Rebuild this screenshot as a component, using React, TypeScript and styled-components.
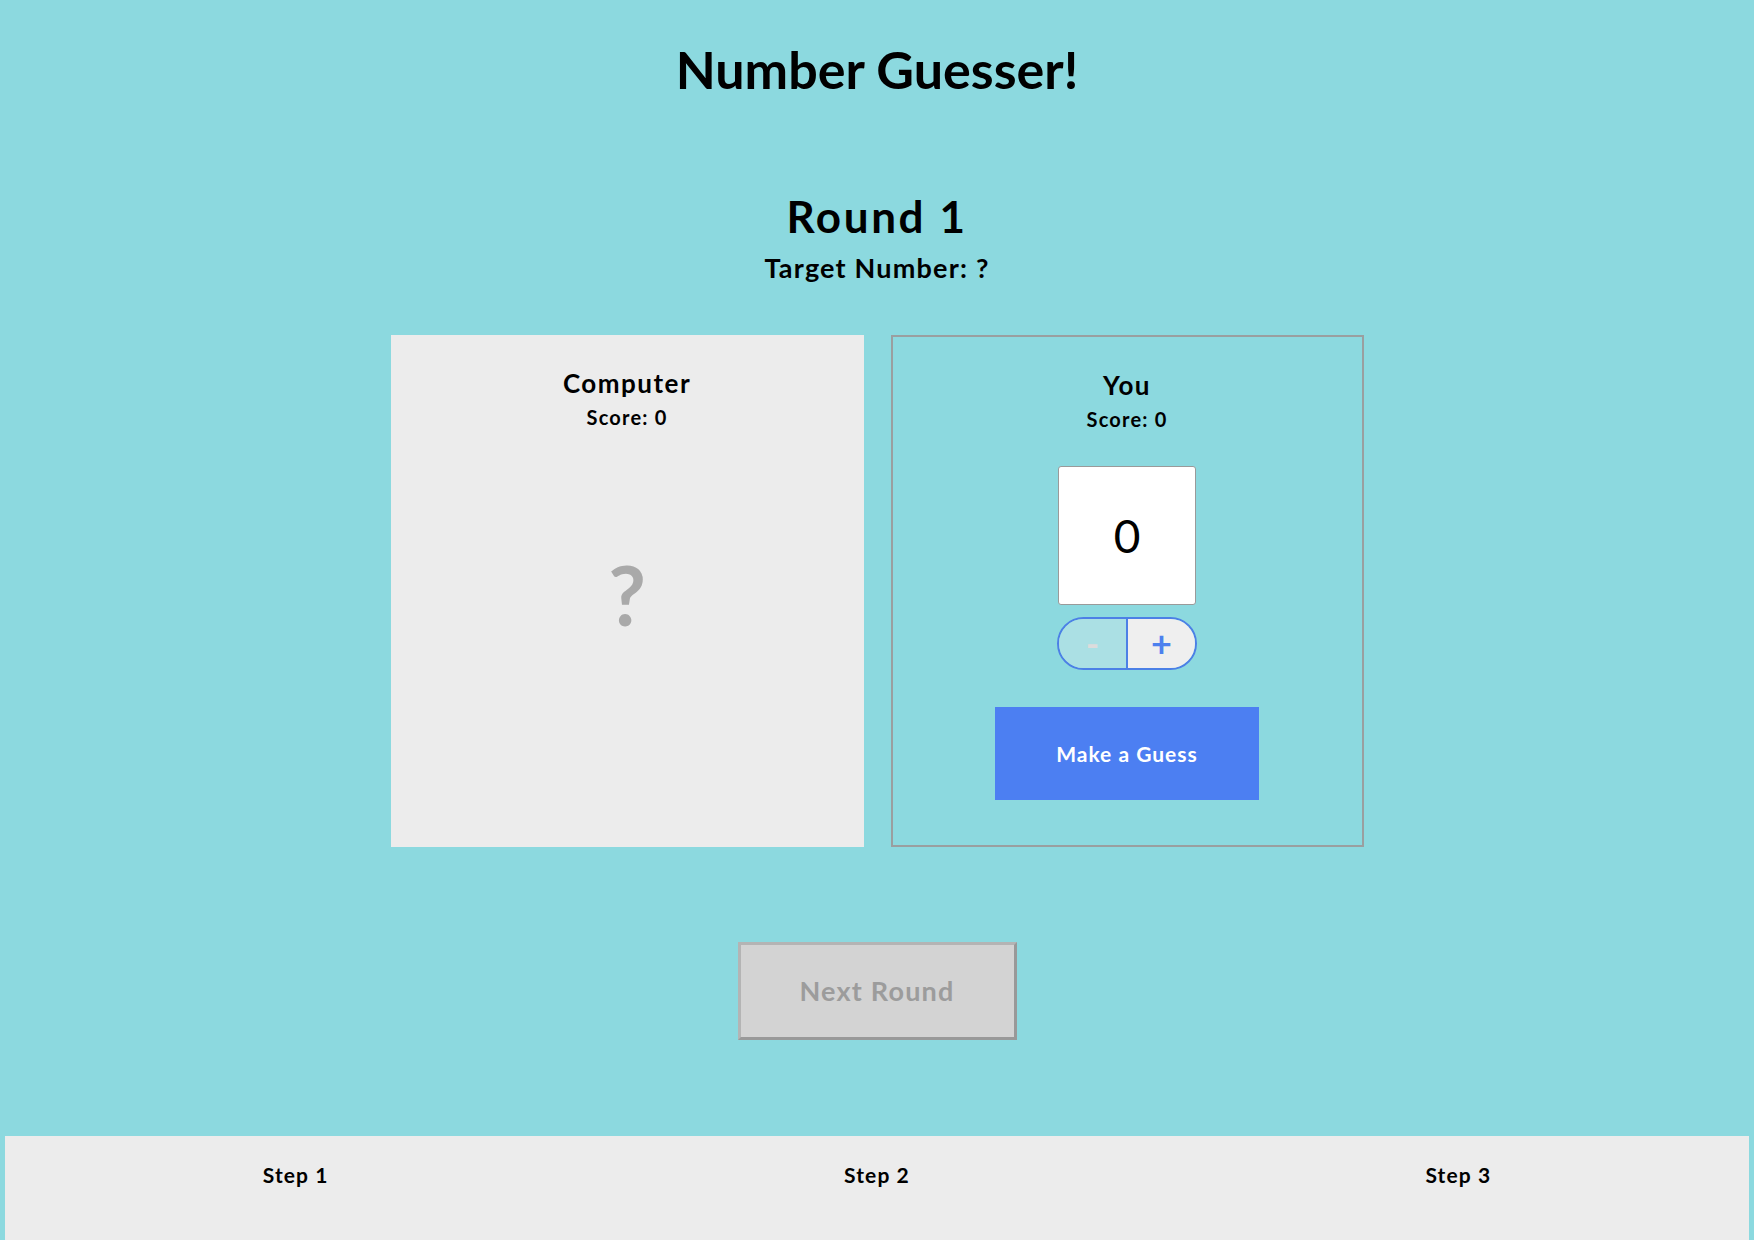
import React from "react";
import styled, { createGlobalStyle } from "styled-components";

const Global = createGlobalStyle`
  html, body {
    margin: 0;
    padding: 0;
    background: #8cd9df;
  }
  body {
    font-family: Lato, "Noto Sans", sans-serif;
    color: #000;
  }
  * { box-sizing: border-box; }
`;

const Page = styled.div`
  display: flex;
  flex-direction: column;
  align-items: center;
  min-height: 1240px;
  text-align: center;
`;

const Title = styled.h1`
  margin: 38px 0 0;
  font-size: 52px;
  line-height: 1.2;
  font-weight: 700;
`;

const RoundBlock = styled.section`
  display: flex;
  flex-direction: column;
  align-items: center;
  margin-top: 90px;
`;

const RoundHeading = styled.h2`
  margin: 0;
  font-size: 44px;
  line-height: 1.2;
  font-weight: 700;
  letter-spacing: 2.6px;
`;

const Target = styled.h3`
  margin: 9px 0 0;
  font-size: 27px;
  line-height: 1.2;
  font-weight: 700;
  letter-spacing: 1.2px;
`;

const Cards = styled.div`
  display: flex;
  gap: 27px;
  margin-top: 50px;
`;

const Card = styled.div<{ $outlined?: boolean }>`
  width: 473px;
  height: 512px;
  padding-top: 33px;
  display: flex;
  flex-direction: column;
  align-items: center;
  background: ${(p) => (p.$outlined ? "transparent" : "#ececec")};
  border: ${(p) => (p.$outlined ? "2px solid #9a9fa0" : "none")};
`;

const PlayerName = styled.h4`
  margin: 0;
  font-size: 26px;
  line-height: 1.2;
  font-weight: 700;
  letter-spacing: 1.5px;
`;

const Score = styled.p`
  margin: 6px 0 0;
  font-size: 20px;
  line-height: 1.2;
  font-weight: 700;
  letter-spacing: 1.2px;
`;

const Hidden = styled.div`
  margin-top: 116px;
  font-size: 82px;
  line-height: 1.2;
  font-weight: 700;
  color: #a9a9a9;
`;

const GuessInput = styled.input`
  margin-top: 35px;
  width: 138px;
  height: 139px;
  border: 1px solid #9a9a9a;
  border-radius: 3px;
  background: #fff;
  text-align: center;
  font-family: Lato, sans-serif;
  font-size: 46px;
  color: #000;
  padding: 0;
  outline: none;
`;

const Stepper = styled.div`
  margin-top: 12px;
  width: 140px;
  height: 53px;
  display: flex;
  border: 2px solid #4c80e6;
  border-radius: 27px;
  overflow: hidden;
`;

const StepButton = styled.button<{ $side: "left" | "right" }>`
  flex: 1;
  border: none;
  margin: 0;
  padding: 0;
  font-family: Lato, sans-serif;
  font-size: 36px;
  font-weight: 700;
  line-height: 1;
  background: ${(p) => (p.$side === "left" ? "#abe0e4" : "#efefef")};
  color: ${(p) => (p.$side === "left" ? "#dcdcdc" : "#4c80ee")};
  border-left: ${(p) => (p.$side === "right" ? "2px solid #4c80e6" : "none")};
  display: flex;
  align-items: center;
  justify-content: center;
`;

const GuessButton = styled.button`
  margin-top: 37px;
  width: 264px;
  height: 93px;
  border: none;
  background: #4c7ff2;
  color: #fff;
  font-family: Lato, sans-serif;
  font-size: 21px;
  font-weight: 700;
  letter-spacing: 1px;
`;

const NextButton = styled.button`
  margin-top: 95px;
  width: 279px;
  height: 98px;
  background: #d3d3d3;
  color: #9c9c9c;
  border-style: solid;
  border-width: 3px;
  border-color: #b4b4b4 #999 #999 #b4b4b4;
  font-family: Lato, sans-serif;
  font-size: 27px;
  font-weight: 700;
  letter-spacing: 1.2px;
`;

const Footer = styled.footer`
  margin: 96px 5px 0;
  align-self: stretch;
  height: 105px;
  background: #ececec;
  display: grid;
  grid-template-columns: repeat(3, 1fr);
  padding-top: 26px;
`;

const StepLabel = styled.div`
  font-size: 21px;
  line-height: 1.2;
  font-weight: 700;
  letter-spacing: 1.1px;
`;

export default function App() {
  return (
    <>
      <Global />
      <Page>
        <Title>Number Guesser!</Title>
        <RoundBlock>
          <RoundHeading>Round 1</RoundHeading>
          <Target>Target Number: ?</Target>
        </RoundBlock>
        <Cards>
          <Card>
            <PlayerName>Computer</PlayerName>
            <Score>Score: 0</Score>
            <Hidden>?</Hidden>
          </Card>
          <Card $outlined>
            <PlayerName>You</PlayerName>
            <Score>Score: 0</Score>
            <GuessInput type="text" value="0" readOnly />
            <Stepper>
              <StepButton $side="left" disabled>-</StepButton>
              <StepButton $side="right">+</StepButton>
            </Stepper>
            <GuessButton>Make a Guess</GuessButton>
          </Card>
        </Cards>
        <NextButton disabled>Next Round</NextButton>
        <Footer>
          <StepLabel>Step 1</StepLabel>
          <StepLabel>Step 2</StepLabel>
          <StepLabel>Step 3</StepLabel>
        </Footer>
      </Page>
    </>
  );
}
